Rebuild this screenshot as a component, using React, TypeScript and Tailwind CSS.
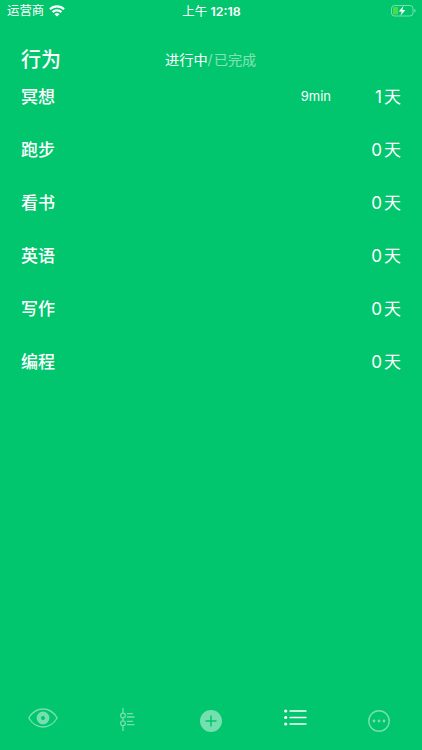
import { useState } from "react"

const habits = [
  { id: 1, name: "冥想", duration: "9min", days: 1 },
  { id: 2, name: "跑步", days: 0 },
  { id: 3, name: "看书", days: 0 },
  { id: 4, name: "英语", days: 0 },
  { id: 5, name: "写作", days: 0 },
  { id: 6, name: "编程", days: 0 },
]

function WifiIcon() {
  return (
    <svg width="16" height="12" viewBox="0 0 16 12" fill="none" stroke="white" strokeWidth="2.2">
      <path d="M1 4.3a10 10 0 0 1 14 0" />
      <path d="M3.6 7.1a6.3 6.3 0 0 1 8.8 0" />
      <path d="M8 11.6 5.5 9.3a3.5 3.5 0 0 1 5 0z" fill="white" stroke="none" />
    </svg>
  )
}

function BatteryIcon() {
  return (
    <svg width="26" height="12" viewBox="0 0 26 12" fill="none">
      <rect x="0.5" y="0.5" width="21.5" height="10.5" rx="3" stroke="white" strokeOpacity="0.45" />
      <rect x="2" y="2" width="5" height="7.5" rx="1.3" fill="#4cdb4c" />
      <path d="M23.4 4v3.6c.8-.3 1.2-1 1.2-1.8s-.4-1.5-1.2-1.8z" fill="white" fillOpacity="0.5" />
      <path d="M12.6.8 7.800 6.500h3l-1.400 4.300 5-5.900h-3.100z" fill="white" />
    </svg>
  )
}

function EyeIcon() {
  return (
    <svg width="30" height="20" viewBox="0 0 30 20" fill="none">
      <path d="M.8 10C4.400 4 9.200 1 15 1s10.600 3 14.200 9C25.600 16 20.800 19 15 19S4.400 16 .8 10z" stroke="white" strokeWidth="1.4" />
      <circle cx="15" cy="10" r="4.200" stroke="white" strokeWidth="4.400" />
    </svg>
  )
}

function TimelineIcon() {
  return (
    <svg width="15" height="23" viewBox="0 0 15 23" fill="none" stroke="white" strokeWidth="1.3">
      <path d="M3 0v5M3 10v2.500M3 18v5" />
      <circle cx="3" cy="7.500" r="2.400" />
      <circle cx="3" cy="15.300" r="2.400" />
      <path d="M7 5.700h6M7 9h7.500M7 13.400h6M7 16.600h7.500" />
    </svg>
  )
}

function AddIcon() {
  return (
    <svg width="22" height="22" viewBox="0 0 22 22">
      <circle cx="11" cy="11" r="11" fill="white" />
      <path d="M11 5.500v11M5.500 11h11" stroke="#02c66d" strokeWidth="1.5" />
    </svg>
  )
}

function ListIcon() {
  return (
    <svg width="23" height="17" viewBox="0 0 23 17" fill="white" stroke="white">
      <g stroke="none">
        <circle cx="1.700" cy="2" r="1.600" />
        <circle cx="1.700" cy="8.500" r="1.600" />
        <circle cx="1.700" cy="15" r="1.600" />
      </g>
      <path d="M6.200 2h15.600M6.200 8.500h15.600M6.200 15h15.600" strokeWidth="1.7" strokeLinecap="round" />
    </svg>
  )
}

function MoreIcon() {
  return (
    <svg width="22" height="22" viewBox="0 0 22 22" fill="white">
      <circle cx="11" cy="11" r="10.200" fill="none" stroke="white" strokeWidth="1.4" />
      <circle cx="6" cy="11" r="1.400" />
      <circle cx="11" cy="11" r="1.400" />
      <circle cx="16" cy="11" r="1.400" />
    </svg>
  )
}

export default function App() {
  const [tab, setTab] = useState("active")

  return (
    <div className="flex h-screen w-full flex-col bg-[#02c66d] font-['Inter','Noto_Sans_CJK_SC',sans-serif] text-white">
      {/* Status bar */}
      <div className="grid h-[22px] grid-cols-3 items-center pl-[7px] pr-[5px] text-[12.4px] leading-[21px]">
        <div className="flex items-center gap-[5px] pb-px">
          <span>运营商</span>
          <WifiIcon />
        </div>
        <div className="pr-px text-center">
          上午 <span className="font-semibold">12:18</span>
        </div>
        <div className="flex justify-end pb-px">
          <BatteryIcon />
        </div>
      </div>

      {/* Header */}
      <div className="flex h-[49px] items-center px-[21px] pt-[26px]">
        <h1 className="w-[144px] text-[20px] leading-6 font-medium">行为</h1>
        <div className="flex text-[14.2px] leading-6">
          <button onClick={() => setTab("active")} className={tab === "active" ? "" : "opacity-50"}>
            进行中
          </button>
          <span className="pr-px opacity-50">/</span>
          <button onClick={() => setTab("done")} className={tab === "done" ? "" : "opacity-50"}>
            已完成
          </button>
        </div>
      </div>

      {/* Habit list */}
      <ul className="flex-1">
        {habits.map(habit => (
          <li key={habit.id} className="flex h-[53px] items-center px-[21px] text-[17px]">
            <span className="flex-1 font-medium">{habit.name}</span>
            <span className="pb-px text-[13px]">{habit.duration}</span>
            <span className="flex w-[70px] justify-end gap-0.5">
              <span>{habit.days}</span>
              <span>天</span>
            </span>
          </li>
        ))}
      </ul>

      {/* Tab bar */}
      <nav className="grid h-[60px] grid-cols-5 justify-items-center">
        <button className="flex h-14 items-center pl-px opacity-45" aria-label="概览">
          <EyeIcon />
        </button>
        <button className="flex h-[58px] items-center pl-px opacity-45" aria-label="时间线">
          <TimelineIcon />
        </button>
        <button className="flex h-[61px] items-center opacity-45" aria-label="添加">
          <AddIcon />
        </button>
        <button className="flex h-[55px] items-center" aria-label="行为">
          <ListIcon />
        </button>
        <button className="flex h-[61px] items-center pr-px opacity-45" aria-label="更多">
          <MoreIcon />
        </button>
      </nav>
    </div>
  )
}
